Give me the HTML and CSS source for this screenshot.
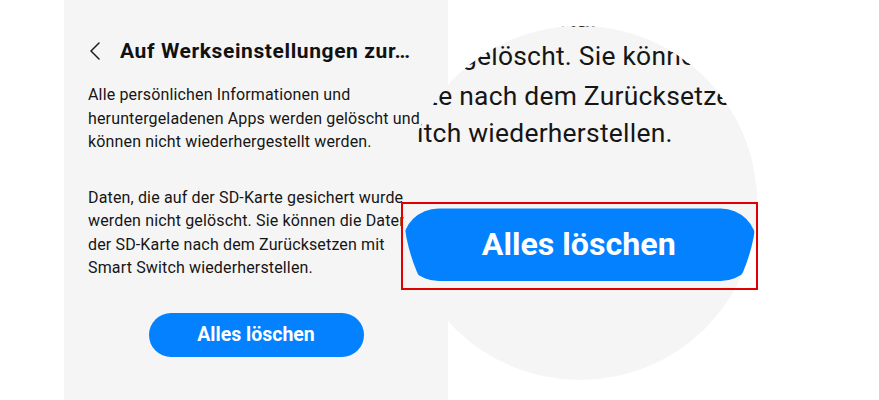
FILE: index.html
```html
<!DOCTYPE html>
<html lang="de">
<head>
<meta charset="utf-8">
<title>Auf Werkseinstellungen zurücksetzen</title>
<link rel="stylesheet" href="styles.css">
</head>
<body>
<div class="stage">
  <section class="panel">
    <div class="header">
      <svg class="back" width="14" height="18" viewBox="0 0 14 18"><path d="M11 1 L3 9 L11 17" fill="none" stroke="#1b1b1b" stroke-width="1.5" stroke-linecap="round" stroke-linejoin="round"/></svg>
      <h1 class="title">Auf Werkseinstellungen zur…</h1>
    </div>
    <p class="text">Alle persönlichen Informationen und<br>heruntergeladenen Apps werden gelöscht und<br>können nicht wiederhergestellt werden.</p>
    <p class="text">Daten, die auf der SD-Karte gesichert wurden,<br>werden nicht gelöscht. Sie können die Daten<br>der SD-Karte nach dem Zurücksetzen mit<br>Smart Switch wiederherstellen.</p>
    <div class="actions"><button class="btn">Alles löschen</button></div>
  </section>

  <div class="lens" aria-hidden="true">
    <div class="lens-inner">
      <section class="panel">
        <div class="header">
          <svg class="back" width="14" height="18" viewBox="0 0 14 18"><path d="M11 1 L3 9 L11 17" fill="none" stroke="#1b1b1b" stroke-width="1.5" stroke-linecap="round" stroke-linejoin="round"/></svg>
          <h1 class="title">Auf Werkseinstellungen zur…</h1>
        </div>
        <p class="text">Alle persönlichen Informationen und<br>heruntergeladenen Apps werden gelöscht und<br>können nicht wiederhergestellt werden.</p>
        <p class="text">Daten, die auf der SD-Karte gesichert wurden,<br>werden nicht gelöscht. Sie können die Daten<br>der SD-Karte nach dem Zurücksetzen mit<br>Smart Switch wiederherstellen.</p>
        <div class="actions"><button class="btn">Alles löschen</button></div>
      </section>
    </div>
  </div>

  <div class="highlight"></div>
</div>
</body>
</html>
```
FILE: styles.css
```css
body {
  margin: 0;
  background: #ffffff;
  font-family: Roboto, "Noto Sans", sans-serif;
}

.stage {
  position: relative;
  width: 879px;
  height: 400px;
  overflow: hidden;
}

.panel {
  margin-left: 64px;
  width: 384px;
  height: 400px;
  box-sizing: border-box;
  padding: 39px 24px 0 24px;
  background: #f5f5f5;
  color: #161616;
}

.header {
  display: flex;
  align-items: center;
  height: 24px;
  margin-bottom: 20px;
}

.back {
  flex: none;
  margin-right: 18px;
}

.title {
  margin: 0;
  font-size: 21px;
  font-weight: 700;
  line-height: 24px;
  letter-spacing: 0.6px;
  white-space: nowrap;
  color: #111111;
}

.text {
  margin: 0;
  font-size: 16px;
  line-height: 23.5px;
  letter-spacing: 0.15px;
  white-space: nowrap;
}

.text + .text {
  margin-top: 32px;
}

.actions {
  display: flex;
  justify-content: center;
  margin-top: 33px;
}

.btn {
  display: flex;
  align-items: center;
  justify-content: center;
  width: 215px;
  height: 44px;
  padding: 0;
  border: 0;
  border-radius: 22px;
  background: #0381fe;
  color: #ffffff;
  font-family: Roboto, "Noto Sans", sans-serif;
  font-size: 19.5px;
  font-weight: 700;
}

.lens {
  position: absolute;
  left: 403px;
  top: 26px;
  width: 354px;
  height: 354px;
  border-radius: 50%;
  overflow: hidden;
  background: #f5f5f5;
}

.lens-inner {
  position: absolute;
  left: -140.6px;
  top: -334px;
  transform: scale(1.65);
  transform-origin: 0 0;
}

.lens-inner .panel {
  margin-left: 0;
}

.highlight {
  position: absolute;
  left: 401px;
  top: 202px;
  width: 357px;
  height: 88px;
  box-sizing: border-box;
  border: 2px solid #e00000;
}
```
